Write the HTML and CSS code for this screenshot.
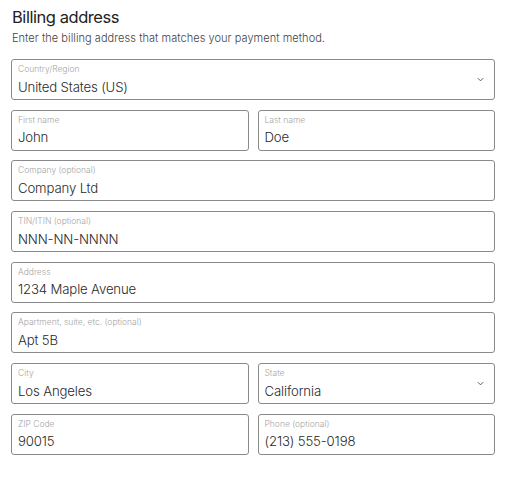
FILE: index.html
```html
<!DOCTYPE html>
<html lang="en">
<head>
    <meta charset="UTF-8">
    <meta name="viewport" content="width=device-width, initial-scale=1.0">
    <title>Billing address</title>
    <link rel="stylesheet" href="styles.css">
</head>
<body>
    <main class="billing">
        <h1>Billing address</h1>
        <p class="intro">Enter the billing address that matches your payment method.</p>

        <div class="fields">
            <div class="field select full">
                <span class="label">Country/Region</span>
                <span class="value">United States (US)</span>
                <svg class="chevron" viewBox="0 0 8 5"><path d="M1 1l3 3 3-3" /></svg>
            </div>

            <div class="field">
                <span class="label">First name</span>
                <span class="value">John</span>
            </div>
            <div class="field">
                <span class="label">Last name</span>
                <span class="value">Doe</span>
            </div>

            <div class="field full">
                <span class="label">Company (optional)</span>
                <span class="value">Company Ltd</span>
            </div>

            <div class="field full">
                <span class="label">TIN/ITIN (optional)</span>
                <span class="value">NNN-NN-NNNN</span>
            </div>

            <div class="field full">
                <span class="label">Address</span>
                <span class="value">1234 Maple Avenue</span>
            </div>

            <div class="field full">
                <span class="label">Apartment, suite, etc. (optional)</span>
                <span class="value">Apt 5B</span>
            </div>

            <div class="field">
                <span class="label">City</span>
                <span class="value">Los Angeles</span>
            </div>
            <div class="field select">
                <span class="label">State</span>
                <span class="value">California</span>
                <svg class="chevron" viewBox="0 0 8 5"><path d="M1 1l3 3 3-3" /></svg>
            </div>

            <div class="field">
                <span class="label">ZIP Code</span>
                <span class="value">90015</span>
            </div>
            <div class="field">
                <span class="label">Phone (optional)</span>
                <span class="value">(213) 555-0198</span>
            </div>
        </div>
    </main>
</body>
</html>
```

FILE: styles.css
```css
body {
    margin: 0;
    font-family: 'Inter', 'Noto Sans', sans-serif;
    background-color: #fff;
    color: #222;
}

.billing {
    width: 484px;
    padding: 6px 0 0 11px;
}

h1 {
    margin: 0 0 0 1px;
    font-size: 16.5px;
    font-weight: 400;
    line-height: 22px;
    letter-spacing: -0.45px;
}

.intro {
    margin: 3px 0 0 1px;
    font-size: 11px;
    font-weight: 300;
    color: #444;
    line-height: 14px;
    letter-spacing: 0.05px;
}

.fields {
    display: grid;
    grid-template-columns: 1fr 1fr;
    column-gap: 9px;
    row-gap: 9.7px;
    margin-top: 14px;
}

.field {
    position: relative;
    height: 41px;
    box-sizing: border-box;
    border: 1px solid #8a8a8a;
    border-radius: 3px;
    padding: 4px 6px 0 6px;
    display: flex;
    flex-direction: column;
}

.field.full {
    grid-column: 1 / 3;
}

.label {
    font-size: 8.5px;
    font-weight: 300;
    color: #a5a5a5;
    line-height: 11px;
}

.value {
    margin-top: 1.5px;
    font-size: 13.2px;
    font-weight: 300;
    color: #2a2a2a;
    line-height: 20px;
    letter-spacing: -0.15px;
}

.chevron {
    position: absolute;
    right: 10px;
    top: 17px;
    width: 7px;
    height: 5px;
    fill: none;
    stroke: #555;
    stroke-width: 1.1;
}
```
